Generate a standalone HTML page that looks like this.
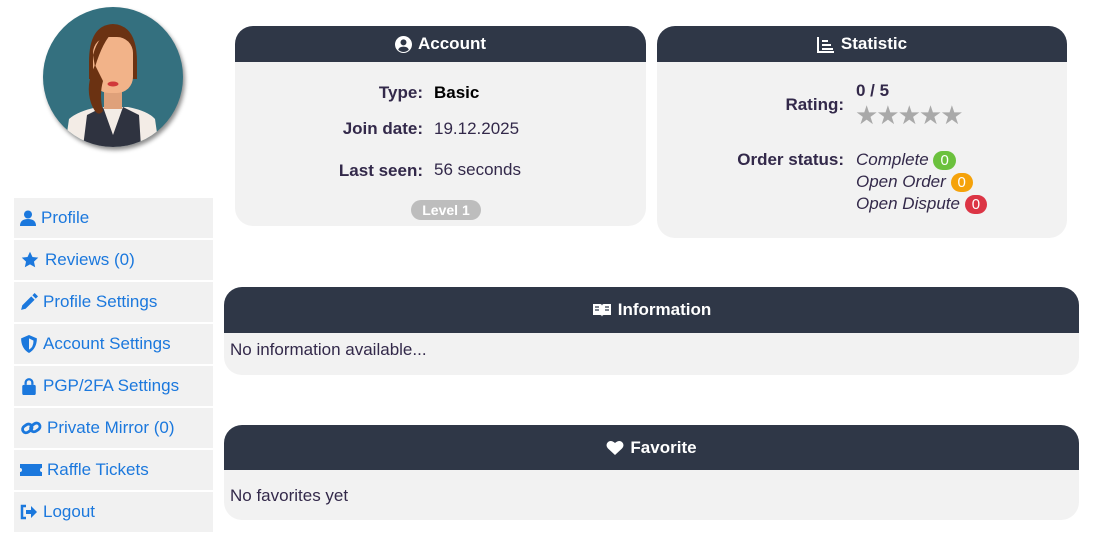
<!DOCTYPE html>
<html><head><style>
*{box-sizing:border-box;margin:0;padding:0}
body{width:1094px;height:558px;background:#fff;font-family:"Liberation Sans",sans-serif;color:#33294a;position:relative;overflow:hidden}
.abs{position:absolute}
.side{left:14px;top:198px;width:199px}
.side div{height:42px;background:#f1f1f1;margin-bottom:0;border-bottom:2px solid #fff;color:#1b78dd;font-size:17px;display:flex;align-items:center;padding-left:6px;gap:5px}
.side svg{fill:#1b78dd}
.card{background:#f2f2f2;border-radius:18px;overflow:hidden}
.hd{background:#2f3747;color:#fff;font-weight:bold;font-size:17px;display:flex;align-items:center;justify-content:center;gap:6px}
.lbl{font-weight:bold;text-align:right;font-size:17px}
.val{font-size:17px}
.badge{display:inline-block;border-radius:10px;color:#fff;font-size:15px;padding:0 7px;line-height:19px;font-style:normal}
</style></head><body>
<div class="abs" style="left:43px;top:7px;width:140px;height:140px;border-radius:50%;background:#34707f;box-shadow:2px 3px 4px rgba(0,0,0,.45);overflow:hidden">
<svg width="140" height="140" viewBox="0 0 140 140">
<path d="M22 140 L26 112 Q35 104 55 100 L85 100 Q105 104 112 112 L116 140Z" fill="#f3ece6"/>
<path d="M40 140 L44 108 L60 100 L70 128 L80 100 L96 108 L98 140Z" fill="#2f3340"/>
<rect x="61" y="80" width="18" height="22" fill="#dfa17a"/>
<path d="M46 55 Q46 18 70 17 Q94 18 94 55 L94 72 L46 72Z" fill="#6b3212"/>
<rect x="50" y="30" width="40" height="56" rx="16" fill="#f2b389"/>
<path d="M50 48 Q56 26 70 25 Q60 34 52 60Z" fill="#6b3212"/>
<path d="M70 25 Q84 27 90 42 L90 32Z" fill="#6b3212"/>
<path d="M52 58 Q42 78 48 96 Q54 112 60 104 Q56 88 60 74Z" fill="#6b3212"/>
<ellipse cx="70" cy="77" rx="5.5" ry="2.5" fill="#d0393a"/>
</svg></div>
<div class="abs side">
<div><svg width="16" height="16" viewBox="0 0 16 16"><circle cx="8" cy="4.5" r="4"/><path d="M0 16Q0 9 8 9Q16 9 16 16Z"/></svg>Profile</div>
<div><svg width="20" height="18" viewBox="0 0 24 24"><path d="M12 1l3.3 7 7.7.9-5.7 5.2 1.6 7.6L12 17.8 5.1 21.7l1.6-7.6L1 8.9 8.7 8z"/></svg>Reviews (0)</div>
<div><svg width="18" height="18" viewBox="0 0 16 16"><path d="M1 15l1-4 8-8 3 3-8 8zM11 2l2-2 3 3-2 2z"/></svg>Profile Settings</div>
<div><svg width="18" height="18" viewBox="0 0 16 16"><path d="M8 0L15 3Q15 12 8 16Q1 12 1 3Z"/><path d="M8 3L12 5Q12 11 8 13Z" fill="#f1f1f1"/></svg>Account Settings</div>
<div><svg width="18" height="18" viewBox="0 0 16 16"><path d="M4 7V5a4 4 0 018 0v2h-2V5a2 2 0 00-4 0v2z"/><rect x="2" y="7" width="12" height="9" rx="1.5"/></svg>PGP/2FA Settings</div>
<div><svg width="22" height="18" viewBox="0 0 22 18"><g fill="none" stroke="#1b78dd" stroke-width="2.8"><rect x="2" y="6" width="10" height="7" rx="3.5" transform="rotate(-35 7 9)"/><rect x="10" y="5" width="10" height="7" rx="3.5" transform="rotate(-35 15 8)"/></g></svg>Private Mirror (0)</div>
<div><svg width="22" height="16" viewBox="0 0 22 16"><path d="M0 2h22v4a2 2 0 000 4v4H0v-4a2 2 0 000-4z"/></svg>Raffle Tickets</div>
<div><svg width="18" height="16" viewBox="0 0 18 16"><path d="M6 2H2v12h4" fill="none" stroke="#1b78dd" stroke-width="2.5"/><path d="M6 6h5V2l6 6-6 6v-4H6z"/></svg>Logout</div>
</div>

<div class="abs card" style="left:235px;top:26px;width:411px;height:200px">
<div class="hd" style="height:36px"><svg width="17" height="17" viewBox="0 0 16 16"><circle cx="8" cy="8" r="8" fill="#fff"/><circle cx="8" cy="6" r="2.8" fill="#2f3747"/><path d="M3 13Q4 10 8 10Q12 10 13 13Q8 17 3 13Z" fill="#2f3747"/></svg>Account</div>
<div class="abs lbl" style="left:0;width:188px;top:57px">Type:</div><div class="abs val" style="left:199px;top:57px;font-weight:bold;color:#000">Basic</div>
<div class="abs lbl" style="left:0;width:188px;top:93px">Join date:</div><div class="abs val" style="left:199px;top:93px">19.12.2025</div>
<div class="abs lbl" style="left:0;width:188px;top:135px">Last seen:</div><div class="abs val" style="left:199px;top:134px">56 seconds</div>
<div class="abs" style="left:176px;top:174px;width:70px;height:20px;border-radius:10px;background:#bdbdbd;color:#fff;font-weight:bold;font-size:14px;text-align:center;line-height:20px">Level 1</div>
</div>

<div class="abs card" style="left:657px;top:26px;width:410px;height:212px">
<div class="hd" style="height:36px"><svg width="18" height="17" viewBox="0 0 18 17"><path d="M1 1v15h16" fill="none" stroke="#fff" stroke-width="2"/><rect x="5" y="4" width="6" height="2" fill="#fff"/><rect x="5" y="8" width="9" height="2" fill="#fff"/><rect x="5" y="12" width="11" height="2" fill="#fff"/></svg>Statistic</div>
<div class="abs lbl" style="left:0;width:187px;top:69px">Rating:</div>
<div class="abs" style="left:199px;top:55px;font-weight:bold;font-size:17px">0 / 5</div>
<div class="abs" style="left:198px;top:75px;color:#a9a9a9;font-size:26px;letter-spacing:-2px;font-family:'DejaVu Sans',sans-serif">★★★★★</div>
<div class="abs lbl" style="left:0;width:187px;top:124px">Order status:</div>
<div class="abs val" style="left:199px;top:123px;font-style:italic;line-height:22px">Complete <span class="badge" style="background:#6bc13d">0</span><br>Open Order <span class="badge" style="background:#f5a20a">0</span><br>Open Dispute <span class="badge" style="background:#dc3545">0</span></div>
</div>

<div class="abs card" style="left:224px;top:287px;width:855px;height:88px">
<div class="hd" style="height:46px"><svg width="20" height="16" viewBox="0 0 20 16"><path d="M1 2h7q2 0 2 2v11q0-2-2-2H1zM19 2h-7q-2 0-2 2v11q0-2 2-2h7z" fill="#fff"/><path d="M3 5h4M3 8h4M13 5h4M13 8h4" stroke="#2f3747" stroke-width="1.2"/></svg>Information</div>
<div style="padding:7px 6px;font-size:17px">No information available...</div>
</div>

<div class="abs card" style="left:224px;top:425px;width:855px;height:95px">
<div class="hd" style="height:45px"><svg width="18" height="16" viewBox="0 0 18 16"><path d="M9 15L2 8.5Q-1 5 2 2Q5 -0.5 9 3Q13 -0.5 16 2Q19 5 16 8.5Z" fill="#fff"/></svg>Favorite</div>
<div style="padding:16px 6px;font-size:17px">No favorites yet</div>
</div>
</body></html>
